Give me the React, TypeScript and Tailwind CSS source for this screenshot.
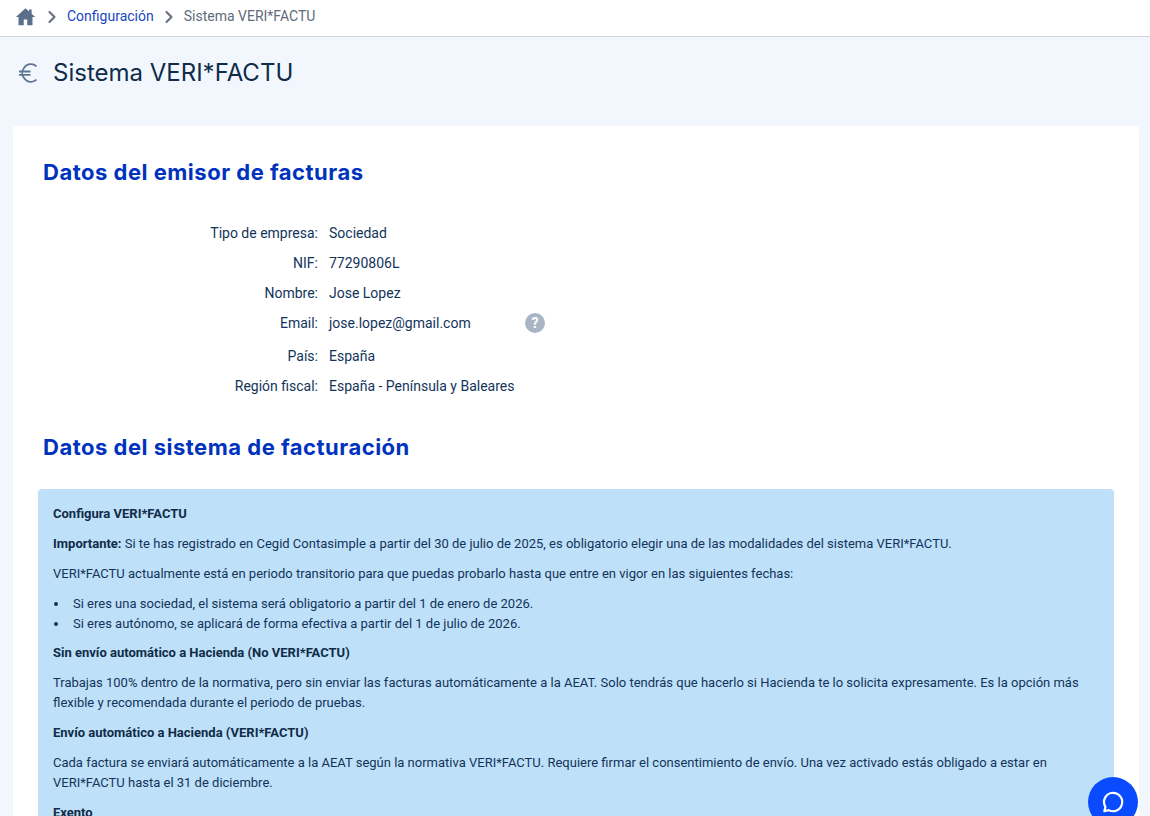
import React from "react";
import { ChevronRight } from "lucide-react";

const rows: [string, string][] = [
  ["Tipo de empresa:", "Sociedad"],
  ["NIF:", "77290806L"],
  ["Nombre:", "Jose Lopez"],
];

function Row({ label, value, help }: { label: string; value: string; help?: boolean }) {
  return (
    <div className={`flex h-[30px] items-center ${help ? "mb-[3px]" : ""}`}>
      <div className="w-[280px] text-right text-[14px] text-[#12345a]">{label}</div>
      <div className="ml-[11px] w-[196px] text-[14px] text-[#12345a]">{value}</div>
      {help && (
        <div className="flex h-5 w-5 items-center justify-center rounded-full bg-[#a9b4c5] text-[14px] font-bold text-white">?</div>
      )}
    </div>
  );
}

function Bullet({ children }: { children: React.ReactNode }) {
  return (
    <li className="flex">
      <span className="flex w-5 items-center">
        <span className="ml-[1px] h-[4px] w-[4px] rounded-full bg-[#12345a]" />
      </span>
      <span>{children}</span>
    </li>
  );
}

export default function App() {
  return (
    <div className="relative h-[816px] w-[1150px] overflow-hidden bg-[#f2f7fe] font-['Roboto',sans-serif] text-[#12345a]">
      <nav className="flex h-[37px] items-center border-b border-[#d0d5db] bg-white pb-[3px] pl-[15px] text-[14px]">
        <svg viewBox="0 0 24 24" className="h-[21px] w-[21px] fill-[#5a6f8c]">
          <path d="M12 2.6 1 12.5h3V22h6v-6.500h4V22h6v-9.500h3l-4-3.600V4h-3v2.200z" />
        </svg>
        <ChevronRight className="ml-[6px] h-[20px] w-[20px] text-[#6b7280]" strokeWidth={2.6} />
        <span className="ml-[5px] text-[#1a45c2]">Configuración</span>
        <ChevronRight className="ml-[5px] h-[20px] w-[20px] text-[#6b7280]" strokeWidth={2.6} />
        <span className="ml-[5px] text-[#5f6b7a]">Sistema VERI*FACTU</span>
      </nav>

      <header className="flex h-[89px] items-start pl-[18px] pt-[17px]">
        <svg viewBox="0 0 20 20" fill="none" stroke="#5f748f" strokeWidth="1.800" className="mt-[9px] h-[20px] w-[20px]">
          <path d="M18.500 3.300A8.200 8.200 0 0 0 6 5a8 8 0 0 0 0 10 8.200 8.200 0 0 0 12.500 1.700" />
          <path d="M1 8.500h11.500M1 11.800h11.500" />
        </svg>
        <h1 className="ml-[15px] font-['Inter',sans-serif] text-[24px] leading-[38px] text-[#0f2c48]">Sistema VERI*FACTU</h1>
      </header>

      <main className="ml-[13px] h-[700px] w-[1126px] rounded-t-[4px] bg-white px-[25px] pt-[30px]">
        <h2 className="ml-[5px] font-['Inter',sans-serif] text-[22px] font-bold leading-[32px] tracking-[0.5px] text-[#0033bd]">Datos del emisor de facturas</h2>
        <section className="mt-[30px]">
          {rows.map(([l, v]) => (
            <Row key={l} label={l} value={v} />
          ))}
          <Row label="Email:" value="jose.lopez@gmail.com" help />
          <Row label="País:" value="España" />
          <Row label="Región fiscal:" value="España - Península y Baleares" />
        </section>
        <h2 className="ml-[5px] mt-[30px] font-['Inter',sans-serif] text-[22px] font-bold leading-[32px] tracking-[0.5px] text-[#0033bd]">Datos del sistema de facturación</h2>
        <section className="mt-[26px] rounded-[4px] bg-[#bfe0f9] px-[15px] pt-[15px] text-[13px] leading-[20px] text-[#12345a]">
          <p className="font-bold text-[#0f2c48]">Configura VERI*FACTU</p>
          <p className="mt-[10px]"><b className="text-[#0f2c48]">Importante:</b> Si te has registrado en Cegid Contasimple a partir del 30 de julio de 2025, es obligatorio elegir una de las modalidades del sistema VERI*FACTU.</p>
          <p className="mt-[10px]">VERI*FACTU actualmente está en periodo transitorio para que puedas probarlo hasta que entre en vigor en las siguientes fechas:</p>
          <ul className="mt-[10px]">
            <Bullet>Si eres una sociedad, el sistema será obligatorio a partir del 1 de enero de 2026.</Bullet>
            <Bullet>Si eres autónomo, se aplicará de forma efectiva a partir del 1 de julio de 2026.</Bullet>
          </ul>
          <p className="mt-[9px] font-bold text-[#0f2c48]">Sin envío automático a Hacienda (No VERI*FACTU)</p>
          <p className="mt-[10px]">Trabajas 100% dentro de la normativa, pero sin enviar las facturas automáticamente a la AEAT. Solo tendrás que hacerlo si Hacienda te lo solicita expresamente. Es la opción más flexible y recomendada durante el periodo de pruebas.</p>
          <p className="mt-[10px] font-bold text-[#0f2c48]">Envío automático a Hacienda (VERI*FACTU)</p>
          <p className="mt-[10px]">Cada factura se enviará automáticamente a la AEAT según la normativa VERI*FACTU. Requiere firmar el consentimiento de envío. Una vez activado estás obligado a estar en VERI*FACTU hasta el 31 de diciembre.</p>
          <p className="mt-[10px] font-bold text-[#0f2c48]">Exento</p>
        </section>
      </main>

      <button className="absolute left-[1088px] top-[777px] flex h-[50px] w-[50px] items-center justify-center rounded-full bg-[#0a4bff]">
        <svg viewBox="0 0 24 24" fill="none" stroke="white" strokeWidth="2" className="h-[26px] w-[26px]">
          <path d="M12 3.500a8.500 8.500 0 1 1-4 16l-4 1 1-4a8.500 8.500 0 0 1 7-13z" strokeLinejoin="round" />
        </svg>
      </button>
    </div>
  );
}
